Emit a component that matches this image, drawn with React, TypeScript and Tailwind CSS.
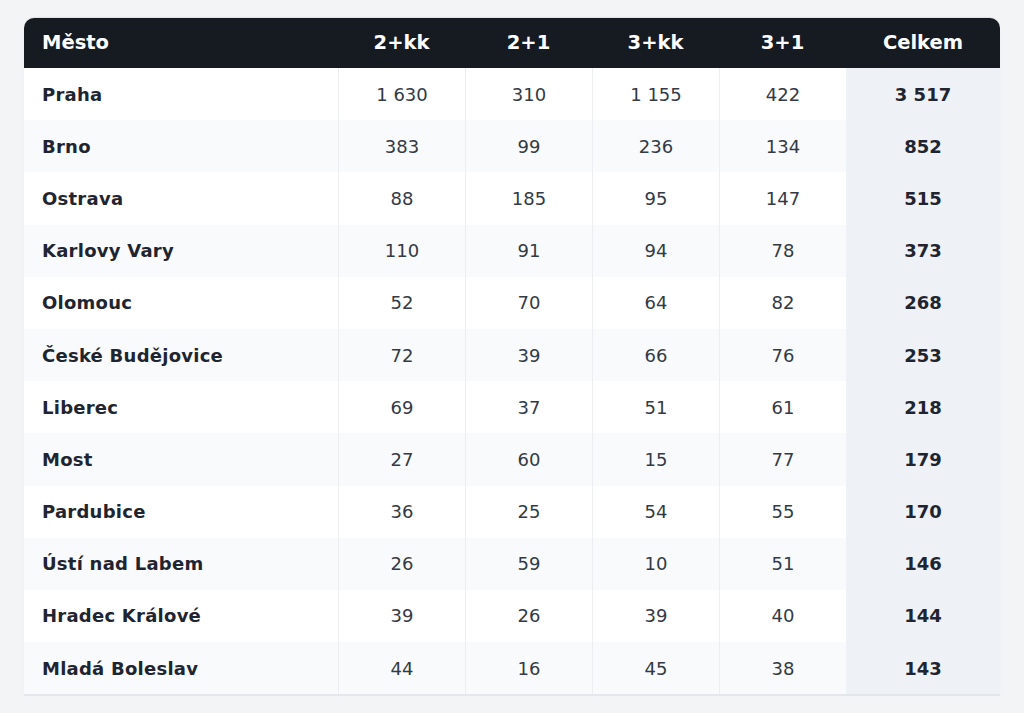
import React from "react";

const rows: [string, string, string, string, string, string][] = [
  ["Praha", "1 630", "310", "1 155", "422", "3 517"],
  ["Brno", "383", "99", "236", "134", "852"],
  ["Ostrava", "88", "185", "95", "147", "515"],
  ["Karlovy Vary", "110", "91", "94", "78", "373"],
  ["Olomouc", "52", "70", "64", "82", "268"],
  ["České Budějovice", "72", "39", "66", "76", "253"],
  ["Liberec", "69", "37", "51", "61", "218"],
  ["Most", "27", "60", "15", "77", "179"],
  ["Pardubice", "36", "25", "54", "55", "170"],
  ["Ústí nad Labem", "26", "59", "10", "51", "146"],
  ["Hradec Králové", "39", "26", "39", "40", "144"],
  ["Mladá Boleslav", "44", "16", "45", "38", "143"],
];

export default function App() {
  return (
    <div
      className="min-h-[713px] w-full bg-[#f3f4f6] pt-[18px] px-[24px]"
      style={{ fontFamily: '"DejaVu Sans", "Noto Sans", sans-serif' }}
    >
      <div className="w-[976px] rounded-t-[10px] overflow-hidden border-b-2 border-[#e3e6ea] shadow-[0_-1px_1px_rgba(0,0,0,0.08)]">
        <div className="grid grid-cols-[314px_127px_127px_127px_127px_154px] h-[50px] bg-[#161b22] text-white font-bold text-[19.5px]">
          <div className="flex items-center pl-[18px]">Město</div>
          <div className="flex items-center justify-center">2+kk</div>
          <div className="flex items-center justify-center">2+1</div>
          <div className="flex items-center justify-center">3+kk</div>
          <div className="flex items-center justify-center">3+1</div>
          <div className="flex items-center justify-center">Celkem</div>
        </div>
        {rows.map((r, i) => (
          <div
            key={r[0]}
            className={
              "grid grid-cols-[314px_127px_127px_127px_127px_154px] h-[52.2px] text-[18px] " +
              (i % 2 === 0 ? "bg-white" : "bg-[#f9fafb]")
            }
          >
            <div className="flex items-center pl-[18px] font-bold tracking-[0.25px] text-[#1f2530]">{r[0]}</div>
            <div className="flex items-center justify-center border-l border-[#eceef1] text-[#333a45]">{r[1]}</div>
            <div className="flex items-center justify-center border-l border-[#eceef1] text-[#333a45]">{r[2]}</div>
            <div className="flex items-center justify-center border-l border-[#eceef1] text-[#333a45]">{r[3]}</div>
            <div className="flex items-center justify-center border-l border-[#eceef1] text-[#333a45]">{r[4]}</div>
            <div className="flex items-center justify-center bg-[#eef1f6] font-bold text-[#1f2530]">{r[5]}</div>
          </div>
        ))}
      </div>
    </div>
  );
}
